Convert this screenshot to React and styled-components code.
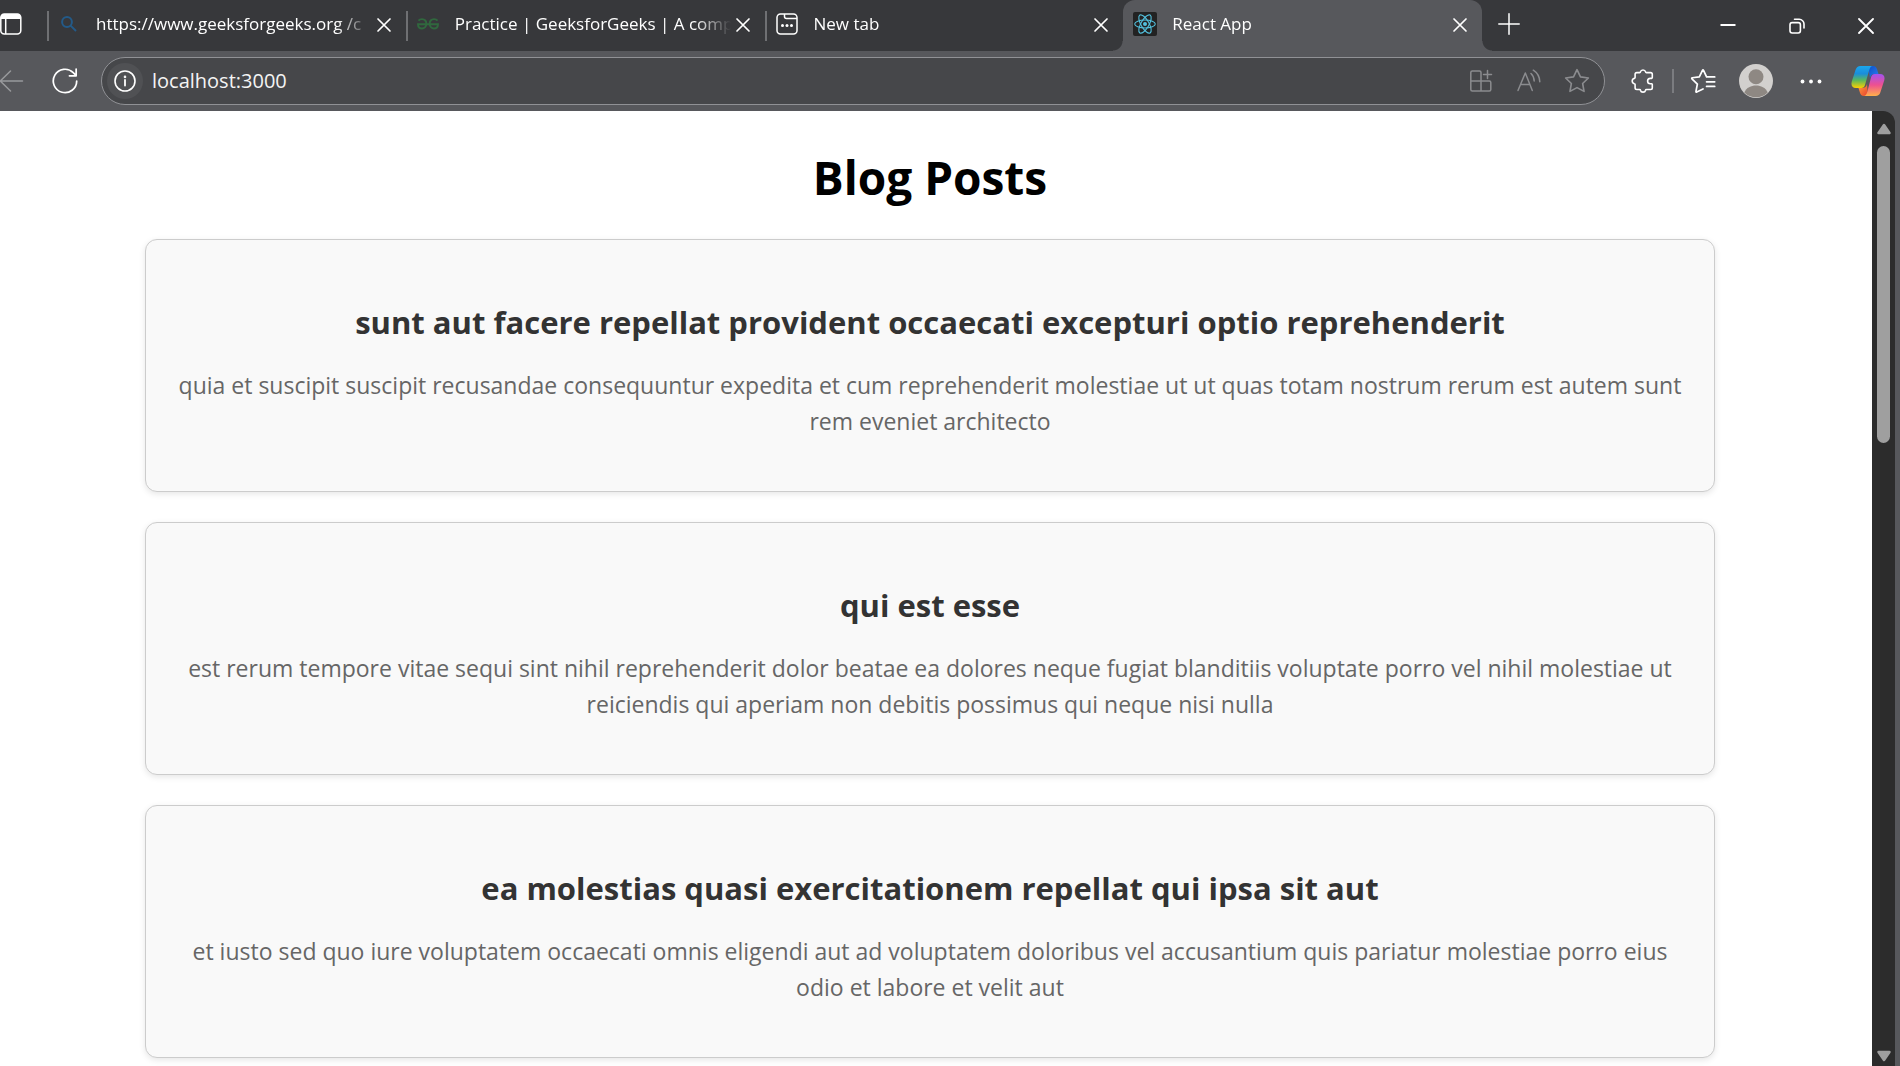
import React from "react";
import styled, { createGlobalStyle } from "styled-components";

const GlobalStyle = createGlobalStyle`
  *, *::before, *::after { box-sizing: border-box; }
  html, body { margin: 0; background: #57585c; }
  body { font-family: "Open Sans", "Noto Sans", sans-serif; overflow: hidden; }
  button { font: inherit; color: inherit; background: none; border: 0; padding: 0; cursor: pointer; }
  svg { display: block; flex: none; }
`;

const Window = styled.div`
  display: flex;
  flex-direction: column;
  height: 100vh;
  overflow: hidden;
`;

/* ---------- Tab strip ---------- */

const TabStrip = styled.header`
  display: flex;
  flex: none;
  height: 51px;
  background: #37383b;
  color: #fff;
`;

const TabActions = styled.button`
  flex: none;
  display: flex;
  align-items: center;
  width: 47px;
  height: 48px;
`;

const Tabs = styled.div`
  display: flex;
  flex: 0 1 1435px;
  min-width: 0;
`;

const Tab = styled.div`
  position: relative;
  display: flex;
  align-items: center;
  flex: 1 1 0;
  min-width: 0;
  padding: 0 10px 3px 10px;
  border-radius: 12px 12px 0 0;
  background: ${(p) => (p.$active ? "#57585c" : "transparent")};

  &::before {
    content: "";
    display: ${(p) => (p.$active ? "none" : "block")};
    position: absolute;
    left: 0;
    top: 11px;
    width: 2px;
    height: 30px;
    background: #6f7073;
  }
`;

const Flare = styled.span`
  position: absolute;
  bottom: 0;
  ${(p) => p.$side}: -10px;
  width: 10px;
  height: 10px;
  background: radial-gradient(
    circle at ${(p) => p.$side} top,
    transparent 9px,
    #57585c 10px
  );
`;

const Favicon = styled.span`
  flex: none;
  display: flex;
  align-items: center;
  justify-content: center;
  width: 24px;
  height: 24px;
`;

const TabTitle = styled.span`
  flex: 1;
  min-width: 0;
  margin-left: 15px;
  white-space: nowrap;
  font-size: 17px;
  line-height: 24px;
  mask-image: linear-gradient(to right, #000 calc(100% - 36px), transparent 100%);
`;

const TabClose = styled.button`
  flex: none;
  display: flex;
  align-items: center;
  justify-content: center;
  width: 24px;
  height: 24px;
`;

const NewTab = styled.button`
  flex: none;
  display: flex;
  align-items: center;
  justify-content: center;
  width: 48px;
  height: 47px;
  margin-left: 3px;
`;

const WindowControls = styled.div`
  display: flex;
  margin-left: auto;
`;

const WindowButton = styled.button`
  display: flex;
  align-items: center;
  justify-content: center;
  width: 69px;
  height: 51px;
`;

/* ---------- Toolbar ---------- */

const Toolbar = styled.nav`
  display: flex;
  flex: none;
  align-items: center;
  height: 60px;
  background: #57585c;
  color: #fff;
`;

const BackButton = styled.button`
  flex: none;
  display: flex;
  align-items: center;
  width: 41px;
  height: 48px;
`;

const ToolButton = styled.button`
  flex: none;
  display: flex;
  align-items: center;
  justify-content: center;
  width: ${(p) => (p.$wide ? "60px" : "48px")};
  height: 46px;
  color: ${(p) => (p.$muted ? "#8b8c8f" : "#fff")};
`;

const AddressBar = styled.label`
  display: flex;
  flex: 1;
  min-width: 0;
  align-items: center;
  height: 48px;
  margin-left: 12px;
  padding: 0 3px 0 5px;
  border: 1px solid #909195;
  border-radius: 24px;
  background: #46474a;
`;

const SiteInfo = styled.span`
  flex: none;
  display: flex;
  align-items: center;
  justify-content: center;
  width: 36px;
  height: 36px;
  border-radius: 50%;
  background: #505154;
`;

const AddressInput = styled.input`
  flex: 1;
  min-width: 0;
  margin-left: 9px;
  padding: 0;
  border: 0;
  outline: 0;
  background: transparent;
  color: #f4f4f4;
  font: 20px/28px "Open Sans", "Noto Sans", sans-serif;
`;

const ToolGroup = styled.div`
  display: flex;
  flex: none;
  align-items: center;
  gap: 5px;
  padding: 0 2px 0 14px;
`;

const ToolDivider = styled.span`
  width: 2px;
  height: 24px;
  background: #7b7c80;
`;

/* ---------- Page and scrollbar ---------- */

const Viewport = styled.div`
  display: flex;
  flex: 1;
  min-height: 0;
  padding-right: 5px;
`;

const Page = styled.main`
  flex: 1;
  min-width: 0;
  overflow: hidden;
  padding: 34px 157px 0 145px;
  background: #fff;
  text-align: center;
`;

const PageTitle = styled.h1`
  margin: 0 0 30px;
  color: #000;
  font-size: 46px;
  line-height: 64px;
  font-weight: 700;
`;

const Posts = styled.div`
  display: flex;
  flex-direction: column;
  gap: 30px;
`;

const Post = styled.article`
  padding: 60px 30px 52px;
  border: 1px solid #ccc;
  border-radius: 12px;
  background: #f9f9f9;
  box-shadow: 0 2px 6px rgba(0, 0, 0, 0.1);
`;

const PostTitle = styled.h2`
  margin: 0 0 23px;
  color: #333;
  font-size: 31px;
  line-height: 44px;
  font-weight: 700;
`;

const PostBody = styled.p`
  margin: 0;
  color: #666;
  font-size: 23px;
  line-height: 36px;
`;

const ScrollTrack = styled.div`
  display: flex;
  flex: none;
  flex-direction: column;
  align-items: center;
  width: 23px;
  padding: 12px 0 4px;
  border-radius: 0 12px 0 0;
  background: #2c2c2c;
`;

const ScrollArrow = styled.button`
  display: flex;
  align-items: center;
  justify-content: center;
  width: 16px;
  height: 12px;
`;

const ScrollThumb = styled.div`
  width: 13px;
  height: 297px;
  margin: 11px 0 auto;
  border-radius: 7px;
  background: #9f9f9f;
`;

/* ---------- Icons ---------- */

const Stroke = ({ size = 24, w = 1.5, children }) => (
  <svg width={size} height={size} viewBox="0 0 24 24" fill="none" stroke="currentColor" strokeWidth={w} strokeLinecap="round" strokeLinejoin="round" aria-hidden="true">
    {children}
  </svg>
);

const WorkspaceIcon = () => (
  <svg width="22" height="22" viewBox="0 0 22 22" aria-hidden="true">
    <rect x="0.8" y="1" width="20" height="20" rx="3.5" fill="none" stroke="#fff" strokeWidth="1.5" />
    <path d="M.8 6V4.500A3.500 3.500 0 0 1 4.300 1h13a3.500 3.500 0 0 1 3.500 3.500V6Z" fill="#fff" />
    <path d="M5.700 6v15" stroke="#fff" strokeWidth="1.500" />
  </svg>
);

const CloseIcon = () => (
  <Stroke w={1.7}>
    <path d="M6 7l12 12M18 7L6 19" />
  </Stroke>
);

const SearchIcon = () => (
  <svg width="16" height="16" viewBox="0 0 16 16" fill="none" stroke="#235a88" strokeWidth="2" aria-hidden="true">
    <circle cx="6" cy="6" r="4.900" />
    <path d="M9.600 9.600L15 15" />
  </svg>
);

const GfgIcon = () => (
  <svg width="22" height="12" viewBox="0 0 22 12" fill="none" stroke="#30683e" strokeWidth="1.900" aria-hidden="true">
    <path d="M1.500 2.600C3.200.6 6.600.6 8.300 2.500c1.500 1.700 1.400 4.800-.2 6.600-1.700 1.800-4.500 1.900-6 .4C1.300 8.700 1 7.700 1 6.200h20c0 1.500-.3 2.500-1.100 3.300-1.500 1.500-4.300 1.400-6-.4-1.600-1.800-1.700-4.900-.2-6.600 1.700-1.900 5.100-1.900 6.800.1" />
  </svg>
);

const NewTabPageIcon = () => (
  <svg width="22" height="22" viewBox="0 0 22 22" fill="none" stroke="#fff" strokeWidth="1.500" aria-hidden="true">
    <rect x="1" y="1" width="20" height="20" rx="3.500" />
    <path d="M8.500 1v2.500a2 2 0 0 0 2 2H21" />
    <g fill="#fff" stroke="none">
      <circle cx="6.500" cy="12.500" r="1.500" />
      <circle cx="11" cy="12.500" r="1.500" />
      <circle cx="15.500" cy="12.500" r="1.500" />
    </g>
  </svg>
);

const ReactIcon = () => (
  <svg width="24" height="24" viewBox="0 0 24 24" aria-hidden="true">
    <rect width="24" height="24" rx="2" fill="#222" />
    <circle cx="12" cy="12" r="2" fill="#53c1de" />
    <g fill="none" stroke="#53c1de" strokeWidth="1.100">
      <ellipse cx="12" cy="12" rx="10.300" ry="4" />
      <ellipse cx="12" cy="12" rx="10.300" ry="4" transform="rotate(60 12 12)" />
      <ellipse cx="12" cy="12" rx="10.300" ry="4" transform="rotate(120 12 12)" />
    </g>
  </svg>
);

const PlusIcon = () => (
  <Stroke w={1.5}>
    <path d="M12 1.800v20.400M1.800 12h20.400" />
  </Stroke>
);

const MinimizeIcon = () => (
  <svg width="16" height="16" viewBox="0 0 16 16" stroke="#fff" strokeWidth="2" aria-hidden="true">
    <path d="M.5 7h15" />
  </svg>
);

const RestoreIcon = () => (
  <svg width="16" height="16" viewBox="0 0 16 16" fill="none" stroke="#fff" strokeWidth="1.600" strokeLinecap="round" aria-hidden="true">
    <rect x="1" y="4.600" width="10.400" height="10.400" rx="2.200" />
    <path d="M5.500 1.300h4.700a4.800 4.800 0 0 1 4.800 4.800V10" />
  </svg>
);

const WindowCloseIcon = () => (
  <svg width="16" height="16" viewBox="0 0 16 16" fill="none" stroke="#fff" strokeWidth="1.800" strokeLinecap="round" aria-hidden="true">
    <path d="M1 1l14 14M15 1l-14 14" />
  </svg>
);

const BackIcon = () => (
  <svg width="24" height="24" viewBox="0 0 24 24" fill="none" stroke="#98999c" strokeWidth="1.500" strokeLinecap="round" strokeLinejoin="round" aria-hidden="true">
    <path d="M22.500 12H0M10.500 2L.3 12l10.200 10" />
  </svg>
);

const ReloadIcon = () => (
  <Stroke size={26} w={1.6}>
    <path d="M22.800 12A10.800 10.800 0 1 1 19.600 4.300L22.300 7M22.300 1v6.200h-6.200" />
  </Stroke>
);

const InfoIcon = () => (
  <Stroke size={24} w={1.6}>
    <circle cx="12" cy="12" r="10" />
    <path d="M12 11v5.500" strokeWidth="1.800" />
    <circle cx="12" cy="7.900" r=".5" fill="currentColor" />
  </Stroke>
);

const AppsIcon = () => (
  <Stroke w={1.5}>
    <path d="M12 12V3.500A1.500 1.500 0 0 0 10.500 2H3.300A1.500 1.500 0 0 0 1.800 3.500v17A1.500 1.500 0 0 0 3.300 22h17a1.500 1.500 0 0 0 1.500-1.500V13.500a1.500 1.500 0 0 0-1.500-1.500H1.800M12 12v10M18.500 1.500v8M14.500 5.500h8" />
  </Stroke>
);

const ReadAloudIcon = () => (
  <Stroke w={1.5}>
    <path d="M1 21.500L8.300 4l7 17.500M3.700 15.500h9.200M14 4.500c2 1.800 3 4 3.200 7.500M16.300 1.200c3.900 2.500 6.300 6 6.500 11.500" />
  </Stroke>
);

const StarIcon = () => (
  <Stroke size={26} w={1.5}>
    <path d="M12 1.500l3.200 6.700 7.300 1-5.300 5.100 1.300 7.300L12 18.100l-6.500 3.500 1.300-7.300L1.500 9.200l7.300-1z" />
  </Stroke>
);

const PuzzleIcon = () => (
  <Stroke w={1.6}>
    <path d="M5.800 3.600H8.600A.8.800 0 0 0 9.400 2.900A2.700 2.700 0 0 1 14.600 2.900A.8.800 0 0 0 15.400 3.600H19.600A1.700 1.700 0 0 1 21.300 5.300V8.600A.8.800 0 0 1 20.600 9.400H19.300A2.700 2.700 0 0 0 19.300 14.800H20.600A.8.800 0 0 1 21.300 15.600V18.800A1.700 1.700 0 0 1 19.600 20.500H15.400A.8.800 0 0 0 14.600 21.200A2.700 2.700 0 0 1 9.400 21.200A.8.800 0 0 0 8.600 20.500H5.800A1.700 1.700 0 0 1 4.100 18.800V15.500A.8.800 0 0 0 3.400 14.700A2.700 2.700 0 0 1 3.400 9.400A.8.800 0 0 0 4.100 8.600V5.300A1.700 1.700 0 0 1 5.800 3.600z" />
  </Stroke>
);

const FavoritesIcon = () => (
  <Stroke size={26} w={1.6}>
    <path d="M12 19.300L6.200 22.200Q5.400 22.400 5.500 21.600L6.800 14.900L1.800 10Q1.200 9.200 2.200 9L8.600 8.200L11.500 2.200Q12 1.300 12.500 2.200L15.300 8.200H22.800M15.300 12.700H22.800M15.300 17H22.800" />
  </Stroke>
);

const AvatarIcon = () => (
  <svg width="34" height="34" viewBox="0 0 34 34" aria-hidden="true">
    <circle cx="17" cy="17" r="17" fill="#d2d0ce" />
    <circle cx="17" cy="12.800" r="7.500" fill="#8e8883" />
    <path d="M5.300 28.500C7.500 23.500 12 21.500 17 21.500s9.500 2 11.700 7A16.500 16.500 0 0 1 5.300 28.500z" fill="#8e8883" />
  </svg>
);

const MoreIcon = () => (
  <svg width="28" height="24" viewBox="0 0 28 24" fill="#fff" aria-hidden="true">
    <circle cx="7.500" cy="12.500" r="1.900" />
    <circle cx="16" cy="12.500" r="1.900" />
    <circle cx="24.500" cy="12.500" r="1.900" />
  </svg>
);

const CopilotIcon = () => (
  <svg width="34" height="32" viewBox="0 0 34 32" aria-hidden="true">
    <defs>
      <linearGradient id="cpLeft" x1="0" y1="0" x2="0" y2="1">
        <stop offset="0" stopColor="#1aa7ee" />
        <stop offset=".35" stopColor="#1a8ddb" />
        <stop offset=".65" stopColor="#5cb85a" />
        <stop offset="1" stopColor="#fdd000" />
      </linearGradient>
      <linearGradient id="cpRight" x1="0" y1="0" x2="0" y2="1">
        <stop offset="0" stopColor="#a352f0" />
        <stop offset=".5" stopColor="#ee5090" />
        <stop offset="1" stopColor="#ffb04a" />
      </linearGradient>
      <linearGradient id="cpTop" x1="0" y1="0" x2="1" y2="1">
        <stop offset="0" stopColor="#0c4fc4" />
        <stop offset="1" stopColor="#2c7cf2" />
      </linearGradient>
      <linearGradient id="cpBottom" x1="0" y1="0" x2="1" y2="1">
        <stop offset="0" stopColor="#ffa03c" />
        <stop offset="1" stopColor="#e8412f" />
      </linearGradient>
    </defs>
    <path d="M17 1h5c2.500 0 3.600 1.600 4.200 3.800L27.500 9H24c-3 0-4.300 1.500-5 4z" fill="url(#cpTop)" />
    <path d="M17 31h-4c-2.500 0-3.600-1.600-4.200-3.800L7.500 23H11c3 0 4.300-1.500 5-4z" fill="url(#cpBottom)" />
    <path d="M9.500 1H22c-2.200 0-3.200 2-3.900 4.500L14 20c-.6 2-1.600 3-3.700 3H5c-4 0-5.200-3-4.200-6.500L4.600 4.800C5.400 2.300 7 1 9.500 1z" fill="url(#cpLeft)" />
    <path d="M24.500 31H12.500c2.200 0 3.200-2 3.900-4.500L20 12.500c.6-2 1.600-3.500 3.700-3.500H29c4 0 5.200 3 4.200 6.500l-3.800 11.700c-.8 2.500-2.400 3.800-4.900 3.800z" fill="url(#cpRight)" />
  </svg>
);

const ArrowUp = () => (
  <svg width="16" height="12" viewBox="0 0 16 12" aria-hidden="true">
    <path d="M8 2l5.500 8h-11z" fill="#9f9f9f" stroke="#9f9f9f" strokeWidth="2.500" strokeLinejoin="round" />
  </svg>
);

const ArrowDown = () => (
  <svg width="16" height="12" viewBox="0 0 16 12" aria-hidden="true">
    <path d="M8 10l5.500-8h-11z" fill="#9f9f9f" stroke="#9f9f9f" strokeWidth="2.500" strokeLinejoin="round" />
  </svg>
);

/* ---------- Data ---------- */

const tabs = [
  { title: "https://www.geeksforgeeks.org /c", icon: <SearchIcon /> },
  { title: "Practice | GeeksforGeeks | A comp", icon: <GfgIcon /> },
  { title: "New tab", icon: <NewTabPageIcon /> },
  { title: "React App", icon: <ReactIcon />, active: true },
];

const posts = [
  {
    title: "sunt aut facere repellat provident occaecati excepturi optio reprehenderit",
    body: "quia et suscipit suscipit recusandae consequuntur expedita et cum reprehenderit molestiae ut ut quas totam nostrum rerum est autem sunt rem eveniet architecto",
  },
  {
    title: "qui est esse",
    body: "est rerum tempore vitae sequi sint nihil reprehenderit dolor beatae ea dolores neque fugiat blanditiis voluptate porro vel nihil molestiae ut reiciendis qui aperiam non debitis possimus qui neque nisi nulla",
  },
  {
    title: "ea molestias quasi exercitationem repellat qui ipsa sit aut",
    body: "et iusto sed quo iure voluptatem occaecati omnis eligendi aut ad voluptatem doloribus vel accusantium quis pariatur molestiae porro eius odio et labore et velit aut",
  },
];

export default function App() {
  return (
    <Window>
      <GlobalStyle />
      <TabStrip>
        <TabActions aria-label="Tab actions"><WorkspaceIcon /></TabActions>
        <Tabs>
          {tabs.map((tab) => (
            <Tab key={tab.title} $active={tab.active}>
              {tab.active && <Flare $side="left" />}
              {tab.active && <Flare $side="right" />}
              <Favicon>{tab.icon}</Favicon>
              <TabTitle>{tab.title}</TabTitle>
              <TabClose aria-label="Close tab"><CloseIcon /></TabClose>
            </Tab>
          ))}
        </Tabs>
        <NewTab aria-label="New tab"><PlusIcon /></NewTab>
        <WindowControls>
          <WindowButton aria-label="Minimize"><MinimizeIcon /></WindowButton>
          <WindowButton aria-label="Restore"><RestoreIcon /></WindowButton>
          <WindowButton aria-label="Close"><WindowCloseIcon /></WindowButton>
        </WindowControls>
      </TabStrip>

      <Toolbar>
        <BackButton aria-label="Back"><BackIcon /></BackButton>
        <ToolButton aria-label="Refresh"><ReloadIcon /></ToolButton>
        <AddressBar>
          <SiteInfo><InfoIcon /></SiteInfo>
          <AddressInput type="text" aria-label="Address" defaultValue="localhost:3000" />
          <ToolButton $muted aria-label="Apps"><AppsIcon /></ToolButton>
          <ToolButton $muted aria-label="Read aloud"><ReadAloudIcon /></ToolButton>
          <ToolButton $muted aria-label="Add to favorites"><StarIcon /></ToolButton>
        </AddressBar>
        <ToolGroup>
          <ToolButton aria-label="Extensions"><PuzzleIcon /></ToolButton>
          <ToolDivider />
          <ToolButton aria-label="Favorites"><FavoritesIcon /></ToolButton>
          <ToolButton aria-label="Profile"><AvatarIcon /></ToolButton>
          <ToolButton aria-label="Settings and more"><MoreIcon /></ToolButton>
          <ToolButton $wide aria-label="Copilot"><CopilotIcon /></ToolButton>
        </ToolGroup>
      </Toolbar>

      <Viewport>
        <Page>
          <PageTitle>Blog Posts</PageTitle>
          <Posts>
            {posts.map((post) => (
              <Post key={post.title}>
                <PostTitle>{post.title}</PostTitle>
                <PostBody>{post.body}</PostBody>
              </Post>
            ))}
          </Posts>
        </Page>
        <ScrollTrack>
          <ScrollArrow aria-label="Scroll up"><ArrowUp /></ScrollArrow>
          <ScrollThumb />
          <ScrollArrow aria-label="Scroll down"><ArrowDown /></ScrollArrow>
        </ScrollTrack>
      </Viewport>
    </Window>
  );
}
